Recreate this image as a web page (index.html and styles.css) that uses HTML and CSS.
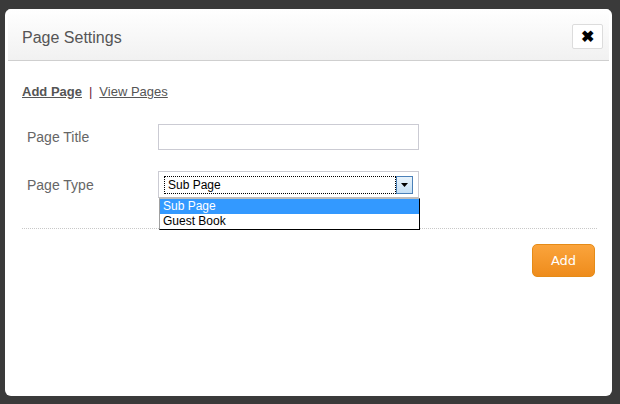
FILE: index.html
```html
<!DOCTYPE html>
<html>
<head>
<meta charset="utf-8">
<link rel="stylesheet" href="styles.css">
</head>
<body>
<div class="dialog">
  <div class="header">
    <div class="title">Page Settings</div>
    <div class="close">&#x2716;</div>
  </div>
  <div class="body">
    <div class="tabs"><a class="tab active">Add Page</a><span class="sep">|</span><a class="tab">View Pages</a></div>
    <div class="form">
      <div class="row">
        <div class="label">Page Title</div>
        <div class="input"></div>
      </div>
      <div class="row">
        <div class="label">Page Type</div>
        <div class="select">
          <div class="focus">Sub Page</div>
          <div class="arrow"><svg width="7" height="4" viewBox="0 0 7 4"><path d="M0 0h7L3.5 4z" fill="#000"/></svg></div>
          <div class="list">
            <div class="opt sel">Sub Page</div>
            <div class="opt">Guest Book</div>
          </div>
        </div>
      </div>
    </div>
    <div class="rule"></div>
    <div class="actions"><div class="btn">Add</div></div>
  </div>
</div>
</body>
</html>
```
FILE: styles.css
```css
html, body { margin: 0; padding: 0; }
body {
  background: #3a3a3a;
  width: 620px;
  height: 404px;
  overflow: hidden;
  font-family: "Liberation Sans", Arial, sans-serif;
  padding-top: 9px;
  box-sizing: border-box;
}
.dialog {
  margin-left: 5px;
  width: 607px;
  height: 387px;
  background: #fff;
  border-radius: 6px;
  overflow: hidden;
}
.header {
  height: 52px;
  box-sizing: border-box;
  border-bottom: 1px solid #cfcfcf;
  background: linear-gradient(#ffffff, #f1f1f1);
  display: flex;
  align-items: center;
  justify-content: space-between;
  padding: 0 9px 0 17px;
  margin: 0 3px;
}
.header .title { margin-left: -3px; }
.title {
  font-size: 16px;
  color: #555;
  padding-top: 6px;
}
.close {
  width: 31px;
  height: 25px;
  box-sizing: border-box;
  border: 1px solid #dcdcdc;
  border-radius: 2px;
  background: #fff;
  display: flex;
  align-items: center;
  justify-content: center;
  font-size: 16px;
  font-weight: bold;
  color: #000;
  margin-top: 3px;
  margin-right: -3px;
}
.body { padding: 23px 17px 0 17px; }
.tabs { font-size: 13px; line-height: 16px; color: #555; }
.tab { color: #555; text-decoration: underline; }
.tab.active { font-weight: bold; }
.sep { color: #6b2040; margin: 0 7px; }
.form { margin-top: 24px; display: flex; flex-direction: column; gap: 21px; }
.row { display: flex; align-items: center; }
.label { width: 131px; padding-left: 5px; font-size: 14px; color: #666; }
.input {
  width: 261px; height: 26px; box-sizing: border-box;
  border: 1px solid #cbcbd3;
}
.select {
  position: relative;
  width: 261px; height: 27px; box-sizing: border-box;
  border: 1px solid #cbcbd3;
  border-bottom-color: #bdbdbd;
  display: flex; align-items: center;
  padding: 0 5px 0 5px;
}
.focus {
  width: 233px; height: 18px; box-sizing: border-box;
  border: 1px dotted #000;
  font-size: 12px; color: #000;
  line-height: 16px; padding-left: 3px;
}
.arrow {
  width: 17px; height: 18px; box-sizing: border-box;
  border: 1px solid #4a80b8;
  background: linear-gradient(#e8f3fc, #c5e0f6);
  display: flex; align-items: center; justify-content: center;
}
.list {
  position: absolute;
  left: 0; top: 26px;
  width: 261px; box-sizing: border-box;
  border: 1px solid #000;
  border-left-color: #a0a0a0;
  border-top: 1px solid #bdbdbd;
  background: #fff;
  z-index: 2;
}
.opt { font-size: 12px; line-height: 15px; padding-left: 3px; color: #000; }
.opt.sel { background: #3399ff; color: #fff; }
.rule { margin-top: 30px; border-top: 1px dotted #c8c8c8; margin-right: -2px; }
.actions { display: flex; justify-content: flex-end; margin-top: 15px; }
.btn {
  width: 63px; height: 33px; box-sizing: border-box;
  border: 1px solid #e58b17;
  border-radius: 5px;
  background: linear-gradient(#fba43c, #ee8c1c);
  color: #fff;
  display: flex; align-items: center; justify-content: center;
  font-family: "DejaVu Sans", sans-serif; font-size: 13px;
}
```
